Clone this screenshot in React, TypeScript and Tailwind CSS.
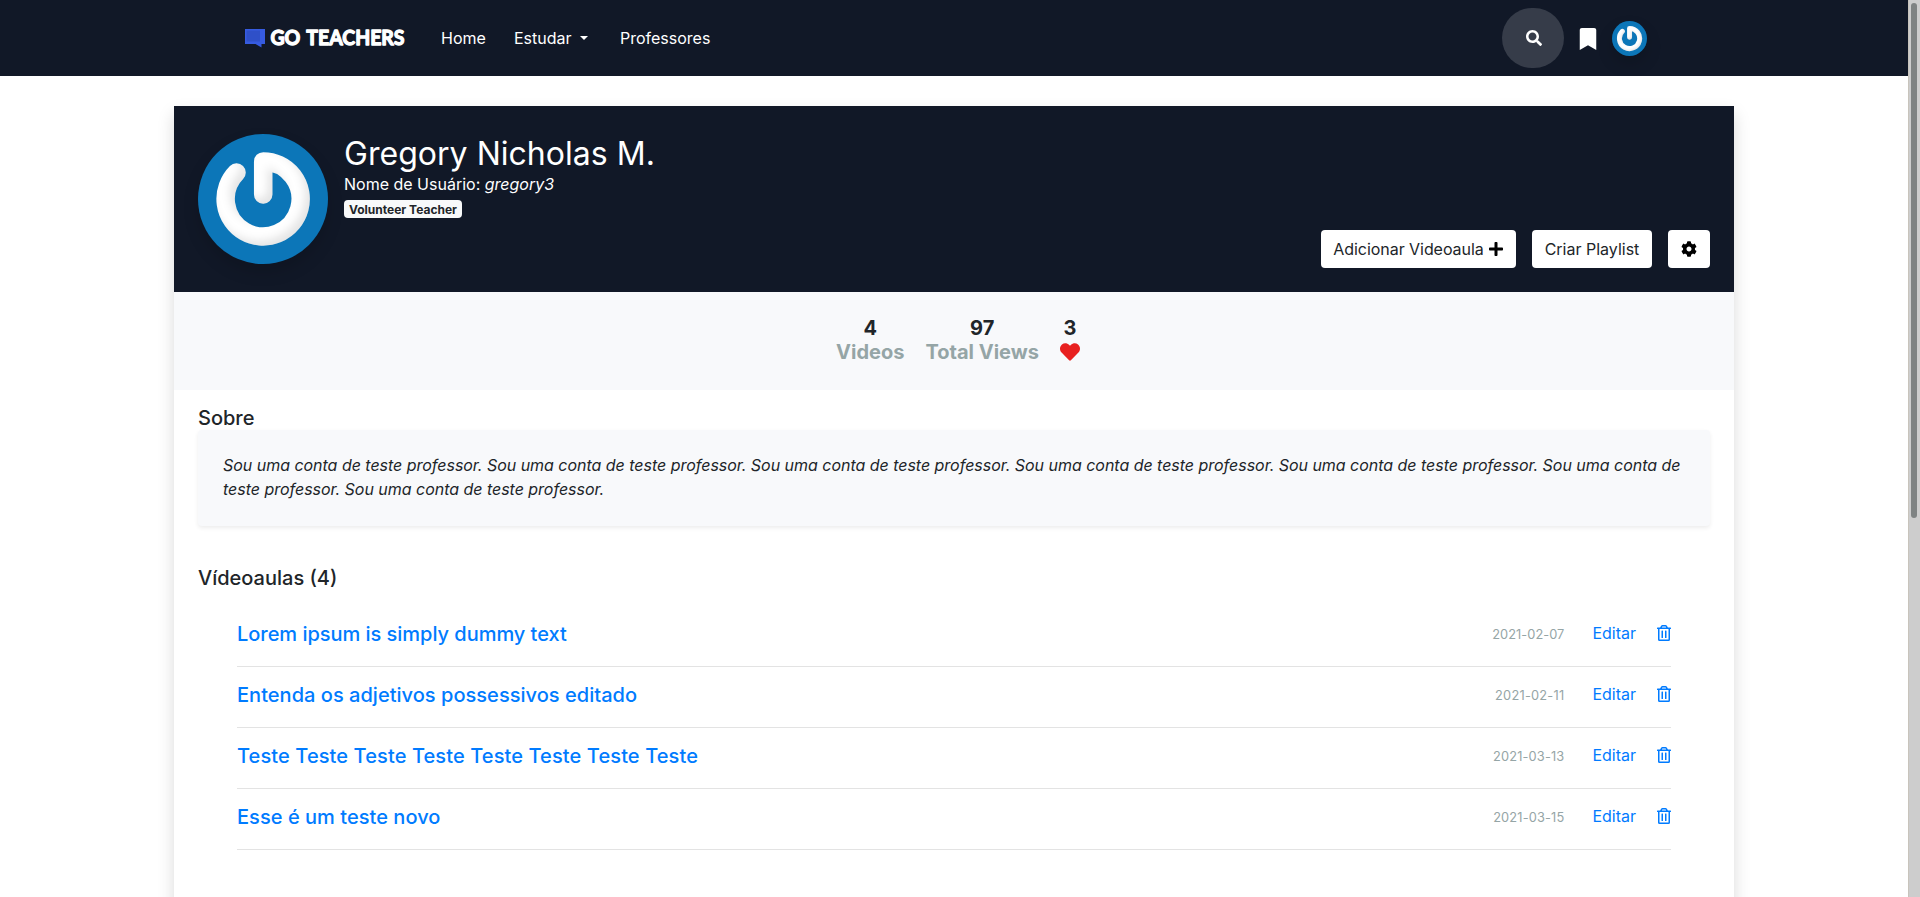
import React from "react";
import { FaSearch, FaBookmark, FaPlus, FaCog, FaHeart, FaRegTrashAlt } from "react-icons/fa";

const videos = [
  { title: "Lorem ipsum is simply dummy text", date: "2021-02-07", titleClass: "tracking-[-0.03px]", dateClass: "tracking-[0.06px]" },
  { title: "Entenda os adjetivos possessivos editado", date: "2021-02-11", titleClass: "tracking-[0.03px]", dateClass: "tracking-[0.24px]" },
  { title: "Teste Teste Teste Teste Teste Teste Teste Teste", date: "2021-03-13", titleClass: "tracking-[0.1px]", dateClass: "tracking-[0.16px]" },
  { title: "Esse é um teste novo", date: "2021-03-15", titleClass: "tracking-[0.04px]", dateClass: "tracking-[0.16px]" },
];

const about =
  "Sou uma conta de teste professor. Sou uma conta de teste professor. Sou uma conta de teste professor. Sou uma conta de teste professor. Sou uma conta de teste professor. Sou uma conta de teste professor. Sou uma conta de teste professor.";

function Avatar({ id, className }: { id: string; className: string }) {
  return (
    <svg viewBox="0 0 130 130" className={className}>
      <defs>
        <filter id={id} x="-20%" y="-20%" width="140%" height="140%">
          <feGaussianBlur in="SourceAlpha" stdDeviation="4" result="soft" />
          <feOffset in="soft" dx="-5" dy="-5" result="moved" />
          <feComposite in="SourceAlpha" in2="moved" operator="out" result="edge" />
          <feFlood floodColor="#000000" floodOpacity="0.22" />
          <feComposite in2="edge" operator="in" result="shade" />
          <feMerge>
            <feMergeNode in="SourceGraphic" />
            <feMergeNode in="shade" />
          </feMerge>
        </filter>
      </defs>
      <rect width="130" height="130" fill="#0c76b8" />
      <path
        d="M38.5 38.5A37.5 37.5 0 1 0 65.200 27.400L65.200 60.500"
        fill="none"
        stroke="#ffffff"
        strokeWidth="18.500"
        strokeLinecap="round"
        strokeLinejoin="round"
        filter={`url(#${id})`}
      />
    </svg>
  );
}

function Logo() {
  return (
    <div className="flex shrink-0 items-center">
      <svg width="20" height="24" viewBox="0 0 20 24">
        <path d="M0 3h20v15h-3.500v3.500l-6-3.500H0z" fill="#365be0" />
        <path d="M1.500 4.500h13.500v11h-13.500z" fill="#2f50c8" />
      </svg>
      <svg width="142" height="32" viewBox="0 0 142 32" className="overflow-visible">
        <text
          x="5.500"
          y="23"
          textLength="134"
          lengthAdjust="spacingAndGlyphs"
          fill="#ffffff"
          stroke="#ffffff"
          strokeWidth="1.300"
          strokeLinejoin="round"
          className="font-['Lato',sans-serif] text-[21px] font-bold [word-spacing:2px]"
        >
          GO TEACHERS
        </text>
      </svg>
    </div>
  );
}

function Navbar() {
  return (
    <nav className="flex h-[76px] items-center bg-[#111827] pr-[261px] pl-[245px] text-white">
      <Logo />
      <div className="ml-[34px] flex items-center">
        <a className="w-[73px]">Home</a>
        <a className="flex w-[106px] items-center">
          Estudar
          <span className="ml-[8px] border-x-[4px] border-t-[4px] border-x-transparent border-t-white" />
        </a>
        <a>Professores</a>
      </div>
      <div className="ml-auto flex items-center">
        <div className="flex h-[60px] w-[62px] items-center justify-center rounded-full bg-[#363c49]">
          <FaSearch size={16} className="ml-0.5" />
        </div>
        <FaBookmark size={22} className="mt-0.5 ml-[13px] w-[22px]" />
        <Avatar id="small-shade" className="ml-[13px] size-[35px] rounded-full shadow-[0_8px_16px_rgba(0,0,0,0.15)]" />
      </div>
    </nav>
  );
}

function Stat({ value, children }: { value: string; children: React.ReactNode }) {
  return (
    <div className="flex flex-col items-center">
      <span className="text-[#212529]">{value}</span>
      <span className="flex h-6 items-center text-[#95a5a6]">{children}</span>
    </div>
  );
}

function ProfileHeader() {
  return (
    <header className="flex h-[186px] bg-[#111827] px-6 pt-7 pb-6 text-white">
      <Avatar id="large-shade" className="size-[130px] rounded-full shadow-[0_8px_16px_rgba(0,0,0,0.15)]" />
      <div className="ml-4">
        <h1 className="pt-px text-[32px] leading-[37px] tracking-[0.03px]">Gregory Nicholas M.</h1>
        <p>
          Nome de Usuário: <em>gregory3</em>
        </p>
        <span className="mt-[4px] block h-[18px] w-fit rounded bg-[#f8f9fa] px-[5px] pt-px text-[12px] leading-[17px] font-bold text-[#212529]">
          Volunteer Teacher
        </span>
      </div>
      <div className="ml-auto flex gap-4 self-end text-[#212529]">
        <button className="flex h-[38px] w-[195px] items-center justify-center gap-1 rounded bg-white tracking-[-0.05px]">
          Adicionar Videoaula <FaPlus size={16} color="#000" />
        </button>
        <button className="h-[38px] w-[120px] rounded bg-white">Criar Playlist</button>
        <button className="flex h-[38px] w-[42px] items-center justify-center rounded bg-white">
          <FaCog size={16} color="#000" />
        </button>
      </div>
    </header>
  );
}

export default function App() {
  return (
    <div className="flex h-[897px] overflow-hidden bg-white font-['Inter',sans-serif] text-[16px] leading-6 text-[#212529]">
      <div className="flex-1">
        <Navbar />
        <main className="mx-[174px] mt-[30px] h-[1200px] bg-white shadow-[0_8px_16px_rgba(0,0,0,0.15)]">
          <ProfileHeader />
          <section className="flex h-[98px] justify-center gap-[21px] bg-[#f8f9fb] pt-6 pl-[8px] text-[20px] font-bold">
            <Stat value="4">Videos</Stat>
            <Stat value="97">Total Views</Stat>
            <Stat value="3">
              <FaHeart size={20} color="#e82020" />
            </Stat>
          </section>
          <section className="px-6 pt-4">
            <h2 className="text-[20px] font-medium">Sobre</h2>
            <p className="rounded bg-[#f8f9fb] pt-[23px] pr-[23px] pb-[25px] pl-[25px] tracking-[-0.026px] italic shadow-[0_2px_4px_rgba(0,0,0,0.075)]">
              {about}
            </p>
            <h2 className="mt-10 text-[20px] font-medium">Vídeoaulas (4)</h2>
            <ul className="mx-[39px] mt-[16px]">
              {videos.map((v) => (
                <li key={v.date} className="flex h-[61px] items-center border-b border-[#e3e3e3] pb-[4px] text-[#007bff]">
                  <a className={`text-[20px] font-medium ${v.titleClass}`}>{v.title}</a>
                  <span className={`mt-px ml-auto text-[12.8px] text-[#95a5a6] ${v.dateClass}`}>{v.date}</span>
                  <a className="mb-[2px] ml-7">Editar</a>
                  <FaRegTrashAlt size={16} className="mb-[2px] ml-[21px] w-[14px]" />
                </li>
              ))}
            </ul>
          </section>
        </main>
      </div>
      <div className="w-3 border-l border-[#c8c4bc] bg-[#cdcdcd] pt-[3px] pl-[2px]">
        <div className="h-[515px] w-[6px] rounded-full bg-[#7f8383]" />
      </div>
    </div>
  );
}
